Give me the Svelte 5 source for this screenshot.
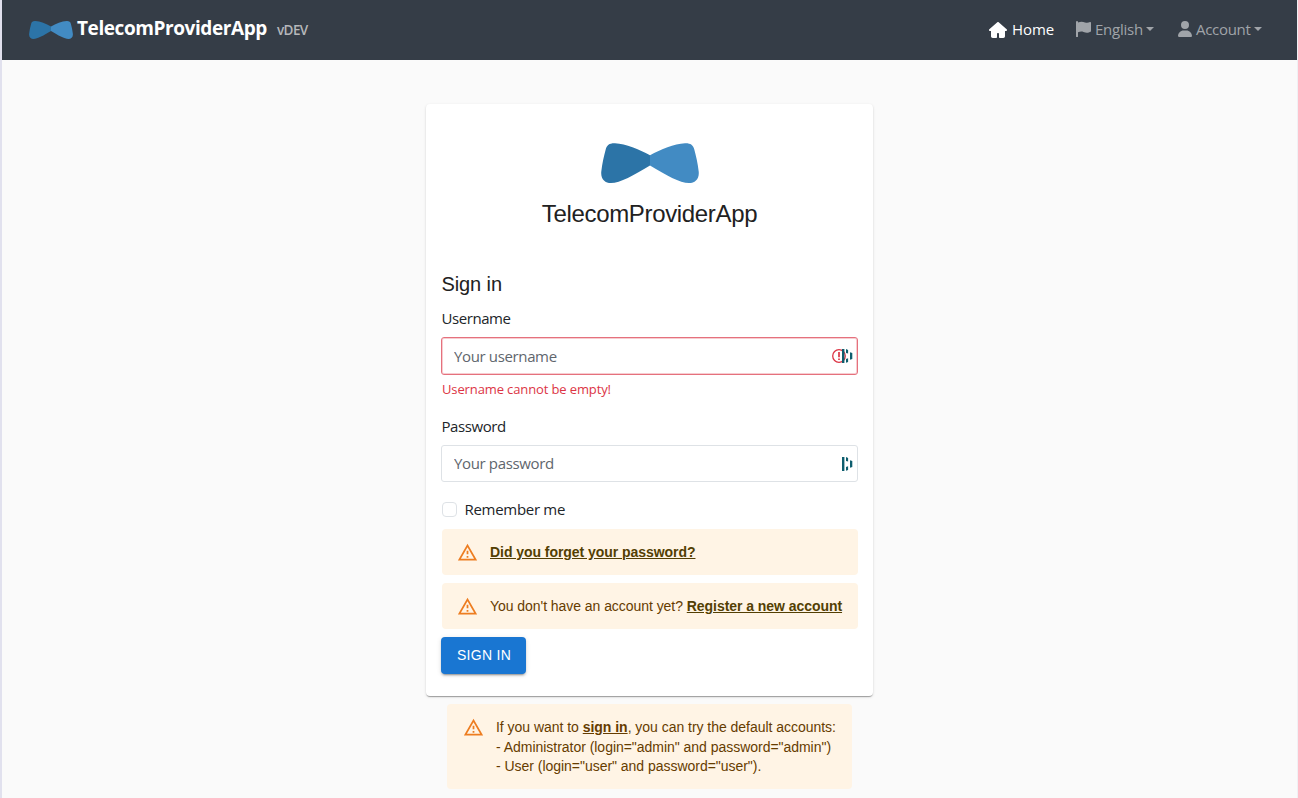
<script>
  let username = $state('');
  let password = $state('');
  let remember = $state(false);
</script>

{#snippet bow(cls)}
  <svg class={cls} viewBox="0 0 98 40" preserveAspectRatio="none" aria-hidden="true">
    <path fill="#2c74a7" d="M49 12.2C38 6.500 25 .8 14 .2C8.500 0 5.800 2 4.700 6.500C3 13 1.200 20 .3 28.500C-.5 36 4 40 10 40C19 40 33 32 49 22.400Z" />
    <path fill="#428bc3" d="M49 12.2C60 6.500 73 .8 84 .2C89.500 0 92.200 2 93.300 6.500C95 13 96.800 20 97.700 28.500C98.500 36 94 40 88 40C79 40 65 32 49 22.400Z" />
  </svg>
{/snippet}

{#snippet warning()}
  <svg class="warn" viewBox="0 0 24 24" aria-hidden="true">
    <path d="M12 5.99L19.53 19H4.47L12 5.99M12 2L1 21h22L12 2zm1 14h-2v2h2v-2zm0-6h-2v4h2v-4z" />
  </svg>
{/snippet}

{#snippet keymark()}
  <svg class="keymark" viewBox="0 0 11 14" aria-hidden="true">
    <path d="M0 0h2.400v14H0zM4 .1l2.100.8v3.700L4 3.900zM4 10l2.100-.8v3.800L4 13.800zM8 3.200l2.300.8v6l-2.300.8z" />
  </svg>
{/snippet}

<div class="page">
  <header>
    <a class="brand" href="#home">
      {@render bow('brand-logo')}
      <span class="brand-name">TelecomProviderApp</span>
      <span class="version">vDEV</span>
    </a>
    <nav>
      <a class="item home active" href="#home">
        <svg class="home-icon" viewBox="0 0 576 512"><path d="M575.8 255.5c0 18-15 32.1-32 32.1h-32l.7 160.2c0 35-20 64.2-56 64.2H352c-18 0-32-14-32-32v-96c0-18-14-32-32-32s-32 14-32 32v96c0 18-14 32-32 32H120c-30 0-56-25-56-56V287.6H32c-18 0-32-14-32-32.1 0-9 3-17 10-24L266.4 8c7-7 15-8 22-8s15 2 21 7l255.4 224.5c8 7 12 15 11 24z" /></svg>
        <span>Home</span>
      </a>
      <a class="item english" href="#language">
        <svg class="flag-icon" viewBox="0 0 15 16"><path d="M1 0a1 1 0 0 1 1 1v.5C5 .2 7 .7 9 1.5c2 .7 3.5.3 5-.4.6-.2 1 .1 1 .7v8.600c-3 1.700-5 1.500-7.500.5C5.500 10.200 4 10.500 2 11.200V15.500a.5.5 0 0 1-.5.5h-1A.5.5 0 0 1 0 15.500V1a1 1 0 0 1 1-1z" /></svg>
        <span>English</span><i class="caret"></i>
      </a>
      <a class="item account" href="#account">
        <svg class="user-icon" viewBox="0 0 448 512"><path d="M224 256a128 128 0 1 0 0-256 128 128 0 1 0 0 256zm-45.700 48C79.800 304 0 383.800 0 482.300 0 498.700 13.300 512 29.700 512h388.600c16.400 0 29.700-13.300 29.700-29.700C448 383.800 368.200 304 269.700 304z" /></svg>
        <span>Account</span><i class="caret"></i>
      </a>
    </nav>
  </header>

  <main>
    <section class="card">
      {@render bow('logo')}
      <h1>TelecomProviderApp</h1>
      <form onsubmit={(e) => e.preventDefault()}>
        <h2>Sign in</h2>
        <label class="l-user" for="username">Username</label>
        <div class="field invalid">
          <input id="username" type="text" placeholder="Your username" bind:value={username} />
          <svg class="error-icon" viewBox="0 0 14 14" aria-hidden="true">
            <circle cx="7" cy="7" r="6.300" /><path d="M7 3v5.200M7 9.500v1.600" />
          </svg>
          {@render keymark()}
        </div>
        <p class="feedback">Username cannot be empty!</p>
        <label class="l-pass" for="password">Password</label>
        <div class="field">
          <input id="password" type="password" placeholder="Your password" bind:value={password} />
          {@render keymark()}
        </div>
        <label class="remember">
          <input type="checkbox" bind:checked={remember} /><span>Remember me</span>
        </label>
        <div class="alert">
          {@render warning()}
          <p><a href="#reset">Did you forget your password?</a></p>
        </div>
        <div class="alert">
          {@render warning()}
          <p>You don't have an account yet? <a href="#register">Register a new account</a></p>
        </div>
        <button type="submit">SIGN IN</button>
      </form>
    </section>
    <div class="alert hint">
      {@render warning()}
      <p>If you want to <a class="soft" href="#signin">sign in</a>, you can try the default accounts:<br />- Administrator (login="admin" and password="admin")<br />- User (login="user" and password="user").</p>
    </div>
  </main>
</div>

<style>
  :global(body) { margin: 0; background: #fafafa; overflow: hidden; }
  * { box-sizing: border-box; }
  h1, h2, p { margin: 0; font-weight: 400; }
  .page {
    height: 798px;
    border-left: 2px solid #e1e1ee;
    border-right: 1px solid #f0f0f4;
    background: #fafafa;
    color: #212529;
    font-family: "Open Sans", "Noto Sans", sans-serif;
    font-size: 15px;
  }
  header {
    height: 60px;
    padding: 0 35px 0 27px;
    display: flex;
    align-items: center;
    justify-content: space-between;
    background: #353d47;
  }
  header a { text-decoration: none; white-space: nowrap; }
  .brand { display: flex; align-items: center; color: #fff; line-height: 24px; }
  .brand-logo { width: 44px; height: 18px; margin-right: 4px; }
  .brand-name { font-size: 19px; font-weight: 700; width: 200px; letter-spacing: -0.42px; margin-top: -4px; }
  .version { font-size: 13.5px; font-weight: 600; color: #b5b7ba; letter-spacing: -0.6px; }
  nav { display: flex; align-items: center; }
  .item { display: flex; align-items: center; color: #a0a4a9; line-height: 24px; }
  .item span { margin-top: -2px; }
  .item.active { color: #fff; }
  .item svg { fill: currentColor; flex: none; }
  .home-icon { width: 18px; height: 16px; margin: -1px 5px 0 0; }
  .flag-icon { width: 15px; height: 16px; margin: -2px 4px 0 0; }
  .user-icon { width: 14px; height: 16px; margin: -2px 4px 0 1px; }
  .home { width: 87px; letter-spacing: -0.1px; }
  .english { width: 101px; letter-spacing: -0.25px; }
  .account { width: 85px; letter-spacing: -0.3px; }
  .caret { margin: -2px 0 0 3px; border: 4px solid transparent; border-top-color: currentColor; border-bottom: 0; }

  main { display: flex; flex-direction: column; align-items: center; padding-top: 44px; }
  .card {
    width: 447px;
    height: 592px;
    padding: 39px 15px 0 16px;
    display: flex;
    flex-direction: column;
    background: #fff;
    border-radius: 4px;
    box-shadow: 0 2px 1px -1px #0003, 0 1px 1px #00000024, 0 1px 3px #0000001f;
  }
  .logo { width: 98px; height: 40px; align-self: center; }
  h1, h2, .alert, button { font-family: "Liberation Sans", Arial, sans-serif; color: #212121; }
  h1 { font-size: 24px; line-height: 32px; margin: 15px 1px 0 0; text-align: center; letter-spacing: -0.34px; }
  form { display: flex; flex-direction: column; align-items: flex-start; padding-top: 38px; }
  h2 { font-size: 20px; line-height: 32px; margin-left: -0.5px; letter-spacing: -0.1px; }
  label { line-height: 24px; letter-spacing: -0.43px; margin-left: -0.5px; }
  .l-user { margin-top: 6px; }
  .l-pass { margin-top: 15px; }
  .field {
    width: 417px;
    height: 37px;
    margin: 7px 0 0 -1px;
    padding: 0 4px 0 12px;
    display: flex;
    align-items: center;
    border: 1px solid #dee2e6;
    border-radius: 3px;
  }
  .field.invalid { height: 38px; border-color: #e5717d; box-shadow: inset 0 0 0 1px #f7cdd1; }
  .field input {
    flex: 1;
    min-width: 0;
    padding: 0 0 1px;
    border: 0;
    outline: 0;
    background: none;
    font: inherit;
    letter-spacing: -0.36px;
  }
  .field input::placeholder { color: #5f666d; opacity: 1; }
  .error-icon { width: 14px; height: 14px; margin-right: -4px; fill: none; stroke: #dc3545; stroke-width: 1.3; }
  .error-icon path { stroke-width: 1.700; }
  .keymark { width: 11px; height: 14px; fill: #0e5e6e; flex: none; }
  .feedback { font-size: 13px; line-height: 20px; margin-top: 4px; color: #dc3545; letter-spacing: -0.12px; }
  .remember { display: flex; align-items: center; gap: 8px; margin-top: 16px; letter-spacing: -0.3px; }
  .remember input {
    appearance: none;
    width: 15px;
    height: 15px;
    margin: 0;
    border: 1px solid #dee2e6;
    border-radius: 4px;
  }
  .remember span { margin-top: -1px; }
  .alert {
    width: 416px;
    height: 46px;
    margin-bottom: 8px;
    padding: 13px 15px;
    display: flex;
    gap: 12px;
    background: #fff4e5;
    border-radius: 4px;
    color: #663c00;
    font-size: 14px;
    line-height: 20px;
    letter-spacing: -0.05px;
    white-space: nowrap;
  }
  .remember + .alert { margin-top: 8px; }
  .alert a { color: #533f03; font-weight: 700; }
  .alert a.soft { color: #663c00; }
  .warn { width: 21px; height: 21px; fill: #ed7d21; flex: none; }
  button {
    width: 85px;
    height: 37px;
    margin-left: -1px;
    padding: 0 0 1px 1px;
    border: 0;
    border-radius: 4px;
    color: #fff;
    background: #1976d2;
    font-size: 14px;
    letter-spacing: 0.3px;
    box-shadow: 0 3px 1px -2px #0003, 0 2px 2px #00000024, 0 1px 5px #0000001f;
  }
  .hint { width: 405px; height: 85px; margin: 8px 0 0; padding-left: 16px; line-height: 19.5px; letter-spacing: -0.03px; }
  .hint p { margin-top: 1px; }
</style>
